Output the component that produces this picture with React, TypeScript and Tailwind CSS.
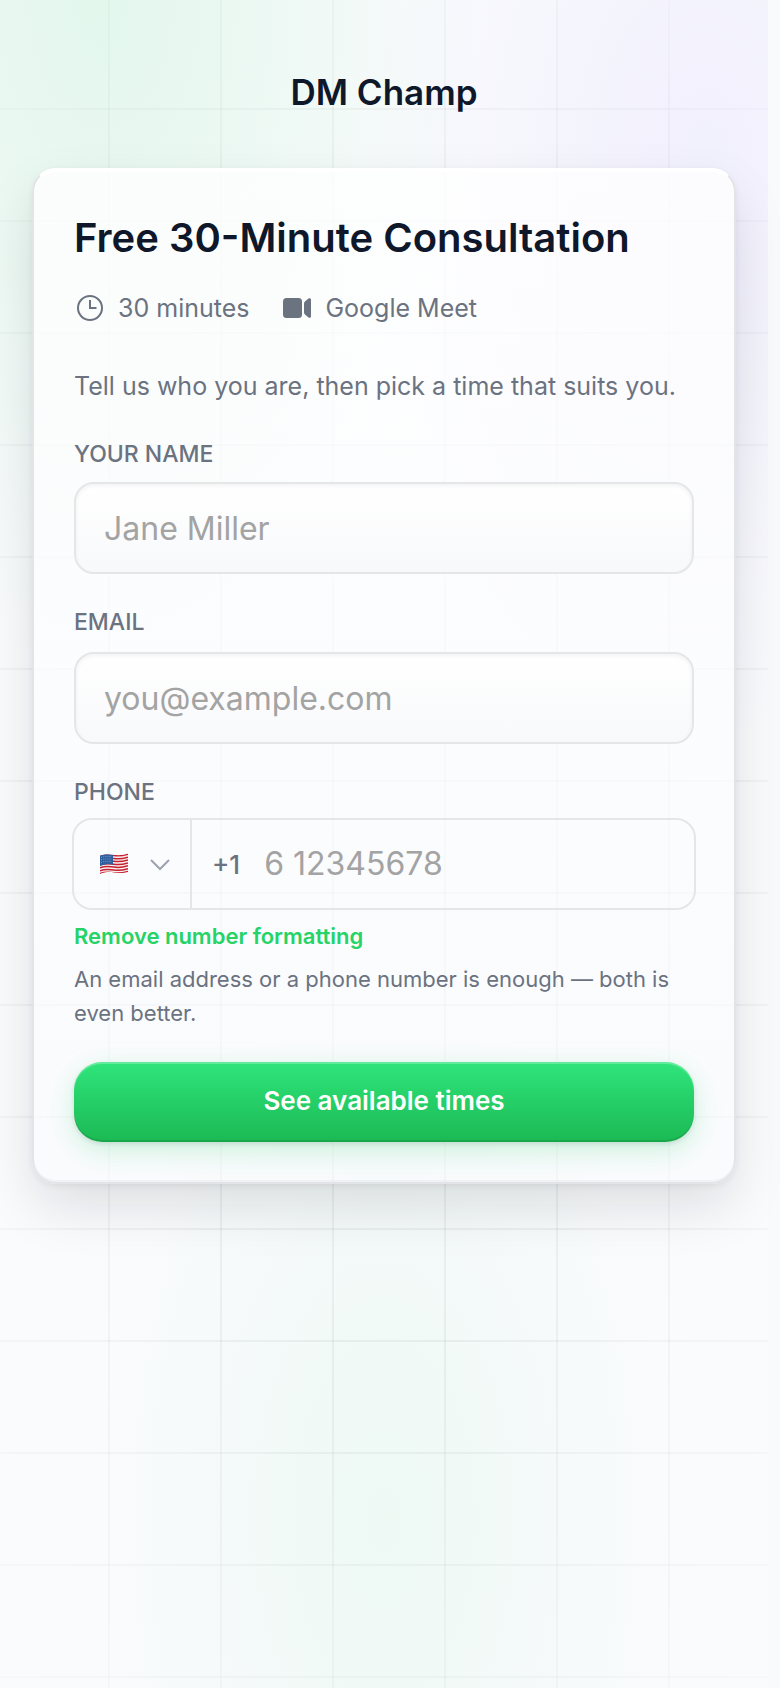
import { useState } from 'react';

const fieldClass =
  'block h-[92px] w-full rounded-[20px] border-2 border-[#e5e6e8] bg-linear-to-b from-white to-[#f8f9fb] px-7 text-[32px] text-gray-900 shadow-[inset_0_2px_4px_rgba(15,23,42,0.05)] outline-none placeholder:text-[#a3a3a3] focus:border-[#25d366]';

const labelClass = 'block text-[23px] leading-8 font-medium uppercase';

function ClockIcon() {
  return (
    <svg aria-hidden="true" viewBox="0 0 32 32" className="size-8" fill="none" stroke="currentColor" strokeWidth="2">
      <circle cx="16" cy="16" r="12" />
      <path d="M16 8v8h6.500" />
    </svg>
  );
}

function VideoIcon() {
  return (
    <svg aria-hidden="true" viewBox="0 0 32 32" className="size-8" fill="currentColor">
      <rect x="2" y="6" width="19" height="20" rx="3.500" />
      <path d="M23 11.500c0-.8.3-1.500.9-2l3.600-3c1-.8 2.500-.2 2.500 1.100v16.800c0 1.300-1.500 1.900-2.500 1.100l-3.600-3c-.6-.5-.9-1.200-.9-2z" />
    </svg>
  );
}

function UsFlag() {
  return (
    <svg aria-hidden="true" viewBox="0 0 28 22" className="h-[22px] w-7">
      <defs>
        <clipPath id="flag-shape">
          <path d="M0 2.500C5 .8 9 1 14 1.800S23 2 28 .5V19c-5 1.500-9 1.300-14 .5S5 19 0 21z" />
        </clipPath>
      </defs>
      <g clipPath="url(#flag-shape)">
        <rect width="28" height="22" fill="#f6f1f2" />
        <g fill="none" stroke="#c8202f" strokeWidth="1.500">
          <path d="M0 3.200C5 1.500 9 1.700 14 2.500s9 .2 14-1.300" />
          <path d="M0 6.100C5 4.400 9 4.600 14 5.400s9 .2 14-1.300" />
          <path d="M0 9C5 7.300 9 7.500 14 8.300s9 .2 14-1.300" />
          <path d="M0 11.900c5-1.700 9-1.500 14-.7s9 .2 14-1.300" />
          <path d="M0 14.800c5-1.700 9-1.500 14-.7s9 .2 14-1.300" />
          <path d="M0 17.700c5-1.700 9-1.500 14-.7s9 .2 14-1.300" />
          <path d="M0 20.500c5-1.700 9-1.500 14-.7s9 .2 14-1.300" />
        </g>
        <path d="M0 2.500C5 .8 8.500 1 13 1.700v10.100C8.500 11 5 11.200 0 13z" fill="#2f5f9e" />
        <path
          d="M1 4.500c4-1.500 7-1.300 11-.7M1 7c4-1.500 7-1.300 11-.7M1 9.500c4-1.500 7-1.300 11-.7"
          fill="none"
          stroke="#8fadd2"
          strokeWidth=".8"
          strokeDasharray="1 1.200"
        />
      </g>
    </svg>
  );
}

function Backdrop() {
  return (
    <div aria-hidden="true" className="pointer-events-none absolute inset-0 overflow-hidden">
      <div className="absolute inset-0 bg-[radial-gradient(ellipse_50%_40%_at_13%_0%,rgba(37,211,102,0.11),transparent),radial-gradient(ellipse_44%_34%_at_92%_10%,rgba(124,92,255,0.07),transparent),radial-gradient(ellipse_38%_34%_at_50%_90%,rgba(37,211,102,0.06),transparent)]" />
      <div className="absolute inset-0 bg-[linear-gradient(to_right,rgba(15,23,42,0.05)_2px,transparent_2px),linear-gradient(to_bottom,rgba(15,23,42,0.05)_2px,transparent_2px)] bg-[size:112px_112px] bg-[position:108px_108px] mask-[radial-gradient(ellipse_85%_75%_at_50%_50%,black_40%,transparent)]" />
    </div>
  );
}

export default function App() {
  const [name, setName] = useState('');
  const [email, setEmail] = useState('');
  const [phone, setPhone] = useState('');

  return (
    <div className="min-h-screen bg-[#f9fafc] pr-3 font-['Inter',sans-serif] text-[#6b7280]">
      <div className="relative min-h-screen bg-[#fafbfd] px-8">
        <Backdrop />
        <div className="relative">
          <header className="pt-16 pb-12 text-center">
            <p className="text-[35px] leading-[56px] font-semibold text-[#0f172a]">DM Champ</p>
          </header>

          <main className="rounded-3xl border-2 border-[#e3e4e8] border-t-white bg-linear-to-b from-white/80 to-[#fafbfe]/60 p-10 shadow-[inset_0_2px_0_#fff,inset_0_-2px_0_rgba(15,23,42,0.04),0_2px_6px_rgba(15,15,20,0.06),0_24px_56px_-4px_rgba(15,15,20,0.13)]">
            <h1 className="text-[40px] leading-[56px] font-semibold text-[#0f172a]">Free 30-Minute Consultation</h1>
            <div className="mt-6 flex flex-wrap items-center gap-x-8 gap-y-2 text-[25px] leading-9">
              <span className="flex items-center gap-3">
                <ClockIcon />
                30 minutes
              </span>
              <span className="flex items-center gap-3">
                <VideoIcon />
                Google Meet
              </span>
            </div>
            <p className="mt-[42px] text-[25px] leading-9">Tell us who you are, then pick a time that suits you.</p>

            <form className="mt-[34px]" onSubmit={(e) => e.preventDefault()}>
              <label htmlFor="name" className={labelClass}>
                Your name
              </label>
              <input
                id="name"
                type="text"
                value={name}
                onChange={(e) => setName(e.target.value)}
                placeholder="Jane Miller"
                className={`mt-3 ${fieldClass}`}
              />

              <label htmlFor="email" className={`mt-8 ${labelClass}`}>
                Email
              </label>
              <input
                id="email"
                type="email"
                value={email}
                onChange={(e) => setEmail(e.target.value)}
                placeholder="you@example.com"
                className={`mt-3.5 ${fieldClass}`}
              />

              <label htmlFor="phone" className={`mt-8 ${labelClass}`}>
                Phone
              </label>
              <div className="-mx-0.5 mt-2.5 flex h-[92px] rounded-[20px] border-2 border-[#e5e6e8]">
                <button
                  type="button"
                  aria-label="Country: United States"
                  className="flex w-[118px] shrink-0 items-center gap-5 border-r-2 border-[#e5e6e8] pl-[26px]"
                >
                  <UsFlag />
                  <svg aria-hidden="true" viewBox="0 0 24 24" className="size-6" fill="none" stroke="#9ca3af" strokeWidth="2">
                    <path d="m3 8 9 9 9-9" />
                  </svg>
                </button>
                <span className="flex items-center pl-5 text-[26px] font-medium">+1</span>
                <input
                  id="phone"
                  type="tel"
                  value={phone}
                  onChange={(e) => setPhone(e.target.value)}
                  placeholder="6 12345678"
                  className="min-w-0 flex-1 rounded-r-[18px] bg-transparent px-6 text-[32px] text-gray-900 outline-none placeholder:text-[#a3a3a3]"
                />
              </div>
              <button type="button" className="mt-2.5 block text-[22px] leading-8 font-semibold text-[#25d366]">
                Remove number formatting
              </button>
              <p className="mt-2.5 text-[22px] leading-[34px]">
                An email address or a phone number is enough — both is even better.
              </p>

              <button
                type="submit"
                className="mt-8 block h-20 w-full rounded-[28px] bg-linear-to-b from-[#2fe57c] to-[#1bb954] pb-1 text-[26px] font-semibold text-white shadow-[inset_0_2px_0_rgba(255,255,255,0.25),inset_0_-2px_0_rgba(0,0,0,0.1),0_2px_4px_rgba(15,23,42,0.1),0_8px_28px_rgba(37,211,102,0.22)]"
              >
                See available times
              </button>
            </form>
          </main>
        </div>
      </div>
    </div>
  );
}
